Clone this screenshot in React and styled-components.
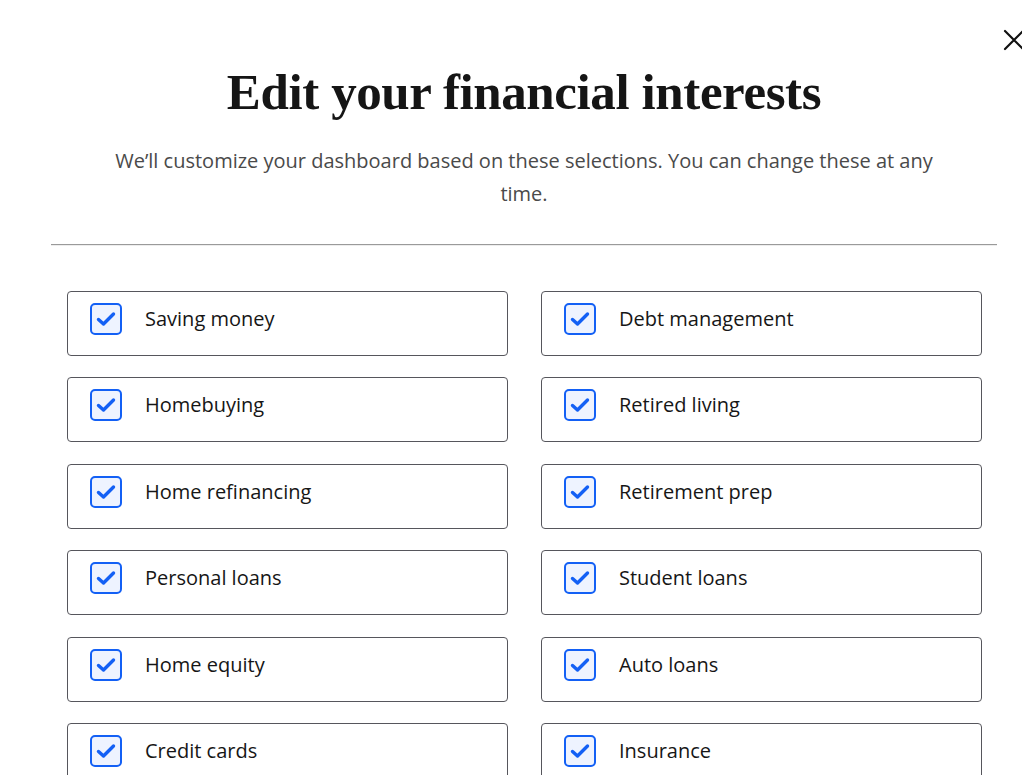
import React from "react";
import styled, { createGlobalStyle } from "styled-components";

const Global = createGlobalStyle`
  html, body { margin: 0; padding: 0; background: #fff; }
  body { font-family: "Open Sans", "Noto Sans", sans-serif; color: #1a1a1a; overflow: hidden; }
  * { box-sizing: border-box; }
`;

const Page = styled.div`
  position: relative;
  width: 1022px;
  height: 775px;
  overflow: hidden;
`;

const Modal = styled.div`
  margin-left: 51px;
  width: 946px;
  padding-top: 62px;
`;

const CloseButton = styled.button`
  position: absolute;
  top: 28px;
  left: 1000px;
  width: 26px;
  height: 26px;
  padding: 0;
  border: none;
  background: none;
  cursor: pointer;
`;

const Title = styled.h1`
  margin: 0;
  text-align: center;
  font-family: "Liberation Serif", "DejaVu Serif", serif;
  font-weight: 700;
  font-size: 51px;
  line-height: 60px;
  letter-spacing: -0.4px;
  color: #151515;
`;

const Subtitle = styled.p`
  margin: 22px auto 0;
  width: 836px;
  text-align: center;
  font-size: 20px;
  line-height: 33px;
  color: #4a4a4a;
`;

const Divider = styled.hr`
  margin: 34px 0 0;
  border: none;
  border-top: 1px solid #9a9a9a;
  border-bottom: 1px solid #ededed;
`;

const Grid = styled.div`
  display: grid;
  grid-template-columns: 441px 441px;
  column-gap: 33px;
  row-gap: 21.4px;
  padding: 0 16px;
  margin-top: 45px;
`;

const Card = styled.label`
  display: flex;
  align-items: flex-start;
  gap: 23px;
  height: 65px;
  padding: 11px 22px 0;
  border: 1px solid #56565c;
  border-radius: 4px;
  background: #fff;
  cursor: pointer;
`;

const Box = styled.span`
  flex: none;
  width: 32px;
  height: 32px;
  border: 2px solid #1360f5;
  border-radius: 5px;
  background: ${(p) => (p.$checked ? "#eef3ff" : "#fff")};
  display: flex;
  align-items: center;
  justify-content: center;
`;

const Label = styled.span`
  font-size: 20px;
  line-height: 32px;
  color: #161616;
  margin-top: 0;
`;

const items = [
  "Saving money",
  "Debt management",
  "Homebuying",
  "Retired living",
  "Home refinancing",
  "Retirement prep",
  "Personal loans",
  "Student loans",
  "Home equity",
  "Auto loans",
  "Credit cards",
  "Insurance",
];

const Check = () => (
  <svg width="20" height="16" viewBox="0 0 20 16" fill="none">
    <path d="M2.5 8.5 L7.5 13 L17.5 3" stroke="#1360f5" strokeWidth="3.4" strokeLinecap="round" strokeLinejoin="round" />
  </svg>
);

export default function App() {
  return (
    <Page>
      <Global />
      <CloseButton aria-label="Close">
        <svg width="26" height="26" viewBox="0 0 26 26">
          <path d="M5 3 L23 21 M23 3 L5 21" stroke="#111" strokeWidth="2.2" strokeLinecap="round" />
        </svg>
      </CloseButton>
      <Modal>
        <Title>Edit your financial interests</Title>
        <Subtitle>
          We’ll customize your dashboard based on these selections. You can change these at any time.
        </Subtitle>
        <Divider />
        <Grid>
          {items.map((it) => (
            <Card key={it}>
              <Box $checked>
                <Check />
              </Box>
              <Label>{it}</Label>
            </Card>
          ))}
        </Grid>
      </Modal>
    </Page>
  );
}
